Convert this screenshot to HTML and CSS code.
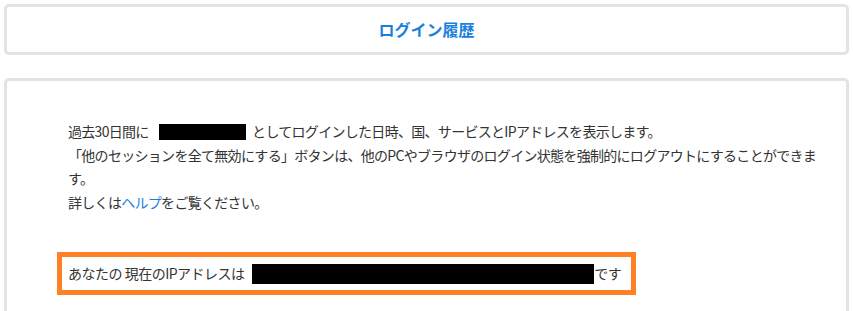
FILE: index.html
```html
<!DOCTYPE html>
<html lang="ja">
<head>
<meta charset="utf-8">
<title>ログイン履歴</title>
<link rel="stylesheet" href="styles.css">
</head>
<body>
<div class="page">
  <section class="card card-head">
    <h1 class="title">ログイン履歴</h1>
  </section>
  <section class="card card-body">
    <p class="intro">過去30日間に<span class="mask mask-user"></span> としてログインした日時、国、サービスとIPアドレスを表示します。<br>「他のセッションを全て無効にする」ボタンは、他のPCやブラウザのログイン状態を強制的にログアウトにすることができます。<br>詳しくは<a class="link" href="#">ヘルプ</a>をご覧ください。</p>
    <div class="ipbox">あなたの 現在のIPアドレスは <span class="mask mask-ip"></span>です</div>
  </section>
</div>
</body>
</html>
```
FILE: styles.css
```css
html, body {
  margin: 0;
  padding: 0;
  background: #fff;
}
body {
  font-family: "Noto Sans CJK JP", "Noto Sans", sans-serif;
  color: #333;
  font-size: 14px;
}
.page {
  padding: 4px 4px 0 4px;
  display: flex;
  flex-direction: column;
  gap: 23px;
}
.card {
  border: 3px solid #e3e3e3;
  border-radius: 5px;
  background: #fff;
}
.card-head {
  height: 45px;
  display: flex;
  align-items: center;
  justify-content: center;
}
.title {
  margin: 0;
  font-size: 16px;
  font-weight: 700;
  color: #1a80dd;
  line-height: 45px;
}
.card-body {
  padding: 39px 24px 60px 50px;
}
.intro {
  margin: 0;
  padding-left: 11px;
  line-height: 23.5px;
  letter-spacing: -0.7px;
}
.mask {
  display: inline-block;
  background: #000;
}
.mask-user {
  width: 87px;
  height: 16px;
  margin-left: 10px;
  margin-right: 4px;
  vertical-align: -3px;
}
.link {
  color: #1a80dd;
  text-decoration: none;
}
.ipbox {
  width: fit-content;
  margin-top: 38px;
  border: 5px solid #ff8125;
  padding: 6px 10px 6px 6px;
  line-height: 21px;
  letter-spacing: -0.5px;
}
.mask-ip {
  width: 342px;
  height: 20px;
  margin-left: 5px;
  vertical-align: -5px;
}
```
